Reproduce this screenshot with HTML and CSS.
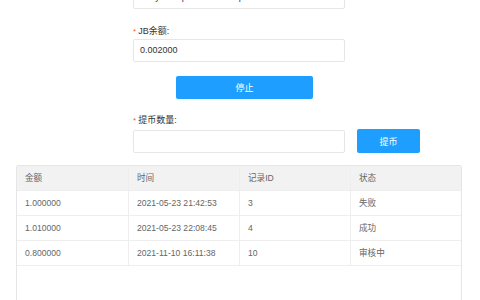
FILE: index.html
```html
<!DOCTYPE html>
<html lang="zh-CN">
<head>
<meta charset="utf-8">
<title>提币</title>
<link rel="stylesheet" href="styles.css">
</head>
<body>
<div class="page">
  <div class="form">
    <div class="field">
      <div class="input">TAsyDDEqWNfxXdSUz5pXd7AWnTWuP</div>
    </div>
    <div class="field">
      <div class="label"><span class="req">*</span>JB余额:</div>
      <div class="input">0.002000</div>
    </div>
    <div class="stop-row">
      <button class="btn btn-stop">停止</button>
    </div>
    <div class="field">
      <div class="label"><span class="req">*</span>提币数量:</div>
      <div class="input-row">
        <div class="input input-amount"></div>
        <button class="btn btn-withdraw">提币</button>
      </div>
    </div>
  </div>
  <div class="table-box">
    <div class="trow thead">
      <div class="cell">金额</div>
      <div class="cell">时间</div>
      <div class="cell">记录ID</div>
      <div class="cell">状态</div>
    </div>
    <div class="trow">
      <div class="cell">1.000000</div>
      <div class="cell">2021-05-23 21:42:53</div>
      <div class="cell">3</div>
      <div class="cell">失败</div>
    </div>
    <div class="trow">
      <div class="cell">1.010000</div>
      <div class="cell">2021-05-23 22:08:45</div>
      <div class="cell">4</div>
      <div class="cell">成功</div>
    </div>
    <div class="trow">
      <div class="cell">0.800000</div>
      <div class="cell">2021-11-10 16:11:38</div>
      <div class="cell">10</div>
      <div class="cell">审核中</div>
    </div>
  </div>
</div>
</body>
</html>
```
FILE: styles.css
```css
html, body {
  margin: 0;
  padding: 0;
  background: #fff;
  overflow: hidden;
}
body {
  font-family: "Liberation Sans", Arial, "Noto Sans CJK SC", sans-serif;
  font-size: 9px;
  color: #333;
}
.page {
  margin-top: -14px;
  padding: 0 17px 0 16px;
}
.form {
  width: 212px;
  margin-left: 117px;
}
.field + .field {
  margin-top: 16px;
}
.label {
  height: 12px;
  line-height: 12px;
  margin-bottom: 2px;
  color: #333;
}
.req {
  color: #ff5722;
  margin-right: 2px;
  font-size: 8px;
}
.input {
  box-sizing: border-box;
  height: 23px;
  line-height: 21px;
  border: 1px solid #e6e6e6;
  border-radius: 2px;
  padding-left: 6px;
  color: #333;
  white-space: nowrap;
  overflow: hidden;
}
.stop-row {
  margin-top: 14px;
  margin-bottom: 15px;
  padding-left: 43px;
}
.btn {
  display: block;
  border: 0;
  border-radius: 2px;
  background: #1e9fff;
  color: #fff;
  font-family: inherit;
  font-size: 9px;
  padding: 0;
  cursor: pointer;
}
.btn-stop {
  width: 137px;
  height: 23px;
}
.stop-row + .field .label {
  margin-bottom: 3px;
}
.input-row {
  display: flex;
  align-items: flex-end;
  gap: 12px;
  width: 287px;
}
.input-amount {
  width: 212px;
  flex: none;
}
.btn-withdraw {
  width: 63px;
  height: 24px;
  flex: none;
}
.table-box {
  margin-top: 12px;
  margin-right: 1px;
  border: 1px solid #e6e6e6;
  border-radius: 2px;
  min-height: 200px;
  color: #666;
  font-size: 8.6px;
}
.trow {
  display: grid;
  grid-template-columns: repeat(4, 1fr);
  height: 24px;
  border-bottom: 1px solid #eee;
}
.thead {
  background: #f2f2f2;
}
.cell {
  padding-left: 8px;
  line-height: 24px;
  white-space: nowrap;
  border-left: 1px solid #eee;
}
.cell:first-child {
  border-left: 0;
}
```
